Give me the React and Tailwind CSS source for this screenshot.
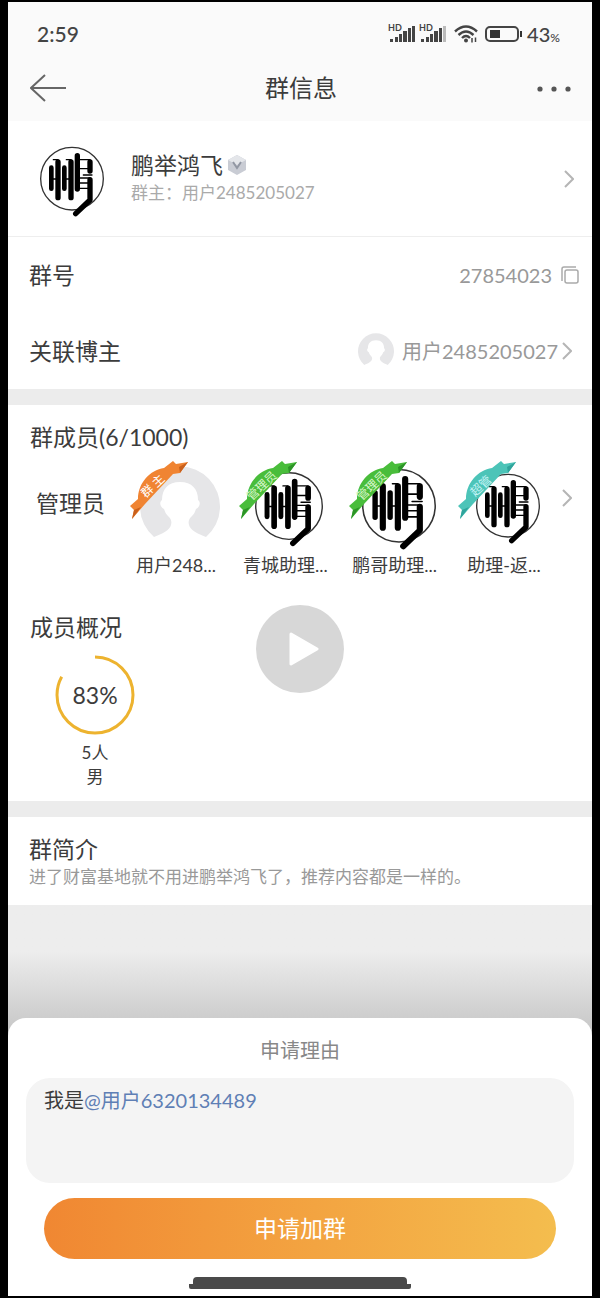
import { useState } from 'react'

const admins = [
    { name: '用户248...', role: '群 主', tone: 'orange', avatar: 'blank' },
    { name: '青城助理...', role: '管理员', tone: 'green', avatar: 'logo', size: 'w-17' },
    { name: '鹏哥助理...', role: '管理员', tone: 'green', avatar: 'logo', size: 'w-[74px]' },
    { name: '助理-返...', role: '超管', tone: 'teal', avatar: 'logo', size: 'w-16' },
]

const tones = {
    orange: { band: '#f08432', fold: '#c9601c', text: '#fff' },
    green: { band: '#49bd3b', fold: '#2c9427', text: '#d8f7c8' },
    teal: { band: '#4cc4b8', fold: '#2fa49c', text: '#c3f3f5' },
}

function LogoAvatar({ className }) {
    return (
        <svg viewBox="28 11 192 232" className={className} fill="none" stroke="#000" strokeLinecap="round">
            <circle cx="124" cy="127" r="94" stroke="#333" strokeWidth="4" fill="#fff" />
            <path strokeWidth="14" d="M62 94V157M101 94V157" />
            <path strokeWidth="16" d="M82 77V184M121 77V184M140 58V158" />
            <path strokeWidth="16" strokeLinejoin="round" d="M178 77V104M178 130V191L135 232" />
            <path strokeWidth="4" d="M68 70H82M107 70H121M62 128H82M101 128H121M139 70H178M139 97H178M158 116H184M139 125H178M139 140H178M139 156H178" />
        </svg>
    )
}

function BlankAvatar({ className }) {
    return (
        <svg viewBox="0 0 80 80" className={className}>
            <path
                fill="#e6e6e8"
                d="M14 71A40 40 0 1 1 66 71C58 68 50 64 49 59C48 55 49 53 52 50C54 48 55 46 56 43C60 41 61 36 58 34C58 23 52 16 40 16C28 16 22 23 22 34C19 36 20 41 24 43C25 46 26 48 28 50C31 53 32 55 31 59C30 64 22 68 14 71Z"
            />
        </svg>
    )
}

function Ribbon({ role, tone }) {
    const c = tones[tone]
    return (
        <svg viewBox="0 0 60 60" className="absolute left-0 top-0 w-15">
            <path fill={c.band} d="M0 45L8 38C8 22 20 9 34 7L43 0L46 3L58 1L50 12L43 13L15 43L2 58L4 49Z" />
            <path fill={c.fold} d="M4 49L11 46L2 58ZM50 12L49 6L58 1Z" />
            <text
                x="23"
                y="29"
                fill={c.text}
                fontSize="12"
                textAnchor="middle"
                transform="rotate(-43 23 25)"
            >
                {role}
            </text>
        </svg>
    )
}

function Chevron() {
    return (
        <svg viewBox="0 0 10 18" className="w-[10px] shrink-0" fill="none" stroke="#b5b5b5" strokeWidth="2">
            <path d="M1 1L9 9L1 17" />
        </svg>
    )
}

function Signal({ weak }) {
    return (
        <svg viewBox="0 0 27 18" className="w-[27px] overflow-visible" fill="#444">
            <text x="-1" y="6" fontSize="9" fontWeight="700">HD</text>
            <path d="M1 14h3v3h-3zM6 12h3v5h-3zM10 9h3v8h-3zM14 6h4v11h-4zM19 3h3v14h-3z" />
            <path fill={weak ? '#bbb' : '#444'} d="M23 1h3v16h-3z" />
        </svg>
    )
}

function Wifi() {
    return (
        <svg viewBox="0 0 24 18" className="mx-[3px] w-6" fill="none" stroke="#444" strokeWidth="2.4">
            <path d="M1 6.5Q12 -3.5 23 6.5M4.5 10Q12 3 19.5 10M8 13Q12 9 16 13" />
            <circle cx="12" cy="15.5" r="2" fill="#444" stroke="none" />
            <path strokeWidth="1.5" d="M18 13V17.5M21.5 12.5V17" />
        </svg>
    )
}

function StatusBar() {
    return (
        <div className="flex h-16 items-center justify-between pl-[29px] pr-8 text-[#444]">
            <span className="text-[21px] font-medium">2:59</span>
            <div className="flex items-center gap-1">
                <Signal />
                <Signal weak />
                <Wifi />
                <svg viewBox="0 0 38 16" className="w-[38px]" fill="none" stroke="#444" strokeWidth="2">
                    <rect x="1" y="1" width="32" height="14" rx="4" />
                    <path fill="#333" stroke="none" d="M5 4h10v8h-10zM35 5h2v6h-2z" />
                </svg>
                <span className="text-xl font-medium leading-6">
                    43<span className="text-xs">%</span>
                </span>
            </div>
        </div>
    )
}

function ProgressRing({ percent }) {
    return (
        <div className="relative flex size-20 items-center justify-center">
            <svg viewBox="0 0 80 80" className="absolute inset-0 -rotate-90" fill="none">
                <circle
                    cx="40"
                    cy="40"
                    r="38"
                    stroke="#edb32f"
                    strokeWidth="3"
                    pathLength="100"
                    strokeDasharray={`${percent} 100`}
                />
            </svg>
            <span className="text-[23px]">{percent}%</span>
        </div>
    )
}

function ApplySheet() {
    const [reason, setReason] = useState('')

    return (
        <form
            onSubmit={(e) => e.preventDefault()}
            className="-mt-5 flex flex-col rounded-t-[18px] bg-white px-[18px] pb-[7px] pt-4"
        >
            <label htmlFor="reason" className="text-center text-xl leading-8 text-[#888]">申请理由</label>
            <div className="mt-3 flex h-[105px] flex-col rounded-3xl bg-[#f4f4f4] px-[18px] py-2">
                <p className="text-xl leading-7">
                    我是<a href="#user" className="text-[#5f7fb5]">@用户6320134489</a>
                </p>
                <textarea
                    id="reason"
                    value={reason}
                    onChange={(e) => setReason(e.target.value)}
                    className="w-full flex-1 resize-none bg-transparent text-xl outline-none"
                />
            </div>
            <button
                type="submit"
                className="mx-[18px] mt-[15px] h-[61px] rounded-full bg-linear-to-r from-[#f08732] to-[#f4bd4e] text-[23px] text-white"
            >
                申请加群
            </button>
            <svg viewBox="0 0 222 12" className="mt-[18px] w-[222px] self-center" fill="#4a4a4a">
                <path d="M8 0H214Q218 0 218 4V7H222V10Q222 12 220 12H2Q0 12 0 10V7H4V4Q4 0 8 0Z" />
            </svg>
        </form>
    )
}

export default function App() {
    return (
        <div className="relative flex min-h-screen flex-col bg-black px-2 py-0.5 font-['Lato','Noto_Sans_CJK_SC',sans-serif] text-[#3c3c3c]">
            <main className="flex flex-1 flex-col bg-[#ececec]">
                <header className="bg-[#fafafa]">
                    <StatusBar />
                    <nav className="grid h-[55px] grid-cols-3 items-start pl-[22px] pr-5">
                        <button aria-label="返回" className="mt-2 w-9">
                            <svg viewBox="0 0 36 28" fill="none" stroke="#666" strokeWidth="2">
                                <path d="M36 14H1M15 1L1 14L15 27" />
                            </svg>
                        </button>
                        <h1 className="text-center text-2xl leading-11">群信息</h1>
                        <button aria-label="更多" className="mt-5 w-9 justify-self-end">
                            <svg viewBox="0 0 36 6" fill="#555">
                                <circle cx="4" cy="3" r="2.6" />
                                <circle cx="18" cy="3" r="2.6" />
                                <circle cx="32" cy="3" r="2.6" />
                            </svg>
                        </button>
                    </nav>
                </header>

                <section className="bg-white">
                    <a href="#profile" className="flex h-[116px] items-center border-b border-[#eee] pl-8 pr-[18px]">
                        <LogoAvatar className="w-16" />
                        <div className="ml-[27px] flex-1">
                            <h2 className="flex items-center gap-1 text-[23px] leading-7">
                                鹏举鸿飞
                                <svg viewBox="0 0 20 20" className="w-5">
                                    <path fill="#c9ccd4" d="M10 0L19 5V15L10 20L1 15V5Z" />
                                    <path fill="#e4e6ea" d="M10 0L19 5L10 10L1 5Z" />
                                    <path fill="none" stroke="#9297a3" strokeWidth="2" d="M6 7L10 13L14 7" />
                                </svg>
                            </h2>
                            <p className="text-[17px] leading-7 text-[#aaa]">群主：用户2485205027</p>
                        </div>
                        <Chevron />
                    </a>
                    <div className="flex h-19 items-center justify-between pl-[21px] pr-3">
                        <span className="text-[23px]">群号</span>
                        <button className="flex items-center gap-2 text-xl text-[#999]">
                            27854023
                            <svg viewBox="0 0 20 20" className="w-5" fill="none" stroke="#aaa" strokeWidth="1.5">
                                <rect x="5" y="5" width="13" height="13" rx="2" />
                                <path d="M2 16V4Q2 2 4 2H16" />
                            </svg>
                        </button>
                    </div>
                    <a href="#blogger" className="flex h-19 items-center pl-[21px] pr-5">
                        <span className="flex-1 text-[23px]">关联博主</span>
                        <BlankAvatar className="w-9" />
                        <span className="ml-2 mr-1 text-xl text-[#999]">用户2485205027</span>
                        <Chevron />
                    </a>
                </section>

                <section className="mt-4 bg-white pb-3 pt-4">
                    <h2 className="pl-[22px] text-[23px] leading-8">群成员(6/1000)</h2>
                    <div className="mt-2 flex pl-7 pr-5">
                        <h3 className="w-[94px] shrink-0 pt-6 text-[23px] leading-9">管理员</h3>
                        <ul className="flex flex-1 justify-between">
                            {admins.map((admin) => (
                                <li key={admin.name} className="w-[92px]">
                                    <div className="relative flex h-[90px] items-center justify-center pl-2">
                                        {admin.avatar === 'blank'
                                            ? <BlankAvatar className="w-20 shrink-0" />
                                            : <LogoAvatar className={admin.size} />}
                                        <Ribbon role={admin.role} tone={admin.tone} />
                                    </div>
                                    <p className="whitespace-nowrap text-center text-lg leading-7">{admin.name}</p>
                                </li>
                            ))}
                        </ul>
                        <a href="#members" aria-label="查看全部成员" className="ml-3 pt-7">
                            <Chevron />
                        </a>
                    </div>
                    <h2 className="mt-8 pl-[22px] text-[23px] leading-8">成员概况</h2>
                    <div className="ml-[47px] mt-3 flex w-20 flex-col items-center text-[17px] leading-6">
                        <ProgressRing percent={83} />
                        <span className="mt-1.5">5人</span>
                        <span>男</span>
                    </div>
                </section>

                <section className="mt-4 bg-white px-[21px] pb-4 pt-4">
                    <h2 className="text-[23px] leading-8">群简介</h2>
                    <p className="text-[17px] leading-6 text-[#999]">进了财富基地就不用进鹏举鸿飞了，推荐内容都是一样的。</p>
                </section>

                {/* fades darker behind the rounded top of the sheet */}
                <div className="min-h-28 flex-1 bg-linear-to-b from-[#ededed] from-35% to-[#c4c4c4]" />
                <ApplySheet />
            </main>

            <button
                aria-label="播放"
                className="absolute left-1/2 top-1/2 flex size-22 -translate-x-1/2 -translate-y-1/2 items-center justify-center rounded-full bg-[#d7d7d7]"
            >
                <svg viewBox="0 0 30 36" className="ml-2 w-[30px]" fill="#fff" stroke="#fff" strokeWidth="3" strokeLinejoin="round">
                    <path d="M2 3L28 18L2 33Z" />
                </svg>
            </button>
        </div>
    )
}
